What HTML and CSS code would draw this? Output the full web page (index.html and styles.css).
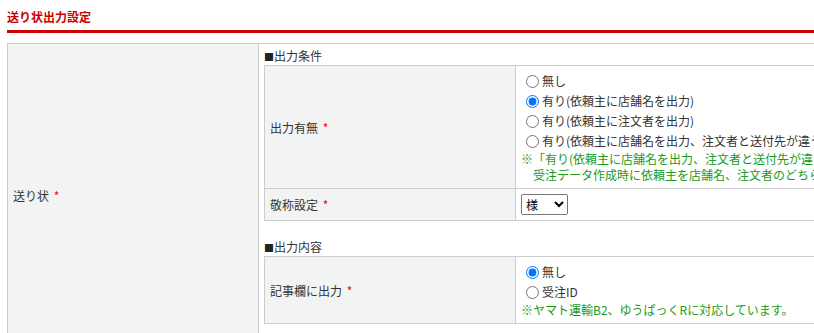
FILE: index.html
```html
<!DOCTYPE html>
<html lang="ja">
<head>
    <meta charset="UTF-8">
    <meta name="viewport" content="width=device-width, initial-scale=1.0">
    <title>送り状出力設定</title>
    <link rel="stylesheet" href="styles.css">
</head>
<body>
    <div class="page">
        <!-- 見出し -->
        <h2 class="section-title">送り状出力設定</h2>

        <table class="form-table">
            <tr>
                <th class="form-label">送り状 <span class="required">*</span></th>
                <td class="form-body">
                    <!-- 出力条件 -->
                    <h3 class="sub-title"><span class="mark">■</span>出力条件</h3>
                    <table class="inner-table">
                        <tr>
                            <th class="form-label">出力有無 <span class="required">*</span></th>
                            <td class="form-value">
                                <label class="radio-line"><input type="radio" name="output">無し</label>
                                <label class="radio-line"><input type="radio" name="output" checked>有り(依頼主に店舗名を出力)</label>
                                <label class="radio-line"><input type="radio" name="output">有り(依頼主に注文者を出力)</label>
                                <label class="radio-line"><input type="radio" name="output">有り(依頼主に店舗名を出力、注文者と送付先が違う場合は注文者を出力)</label>
                                <p class="note">※「有り(依頼主に店舗名を出力、注文者と送付先が違う場合は注文者を出力)」を選択した場合、<br>受注データ作成時に依頼主を店舗名、注文者のどちらかに自動で設定します。</p>
                            </td>
                        </tr>
                        <tr>
                            <th class="form-label">敬称設定 <span class="required">*</span></th>
                            <td class="form-value">
                                <select class="honorific">
                                    <option>様</option>
                                    <option>殿</option>
                                    <option>なし</option>
                                </select>
                            </td>
                        </tr>
                    </table>

                    <!-- 出力内容 -->
                    <h3 class="sub-title"><span class="mark">■</span>出力内容</h3>
                    <table class="inner-table">
                        <tr>
                            <th class="form-label">記事欄に出力 <span class="required">*</span></th>
                            <td class="form-value">
                                <label class="radio-line"><input type="radio" name="memo" checked>無し</label>
                                <label class="radio-line"><input type="radio" name="memo">受注ID</label>
                                <p class="note">※ヤマト運輸B2、ゆうぱっくRに対応しています。</p>
                            </td>
                        </tr>
                    </table>
                </td>
            </tr>
        </table>
    </div>
</body>
</html>
```

FILE: styles.css
```css
/* 全体 */
html, body {
    overflow: hidden;
}

body {
    margin: 0;
    font-family: "Noto Sans CJK JP", "Noto Sans", sans-serif;
    font-size: 12px;
    color: #333;
    background-color: #fff;
}

.page {
    width: 1300px;
    padding-left: 7px;
}

/* 見出し */
.section-title {
    margin: 0 0 10px;
    padding: 8px 0 5px;
    font-size: 12px;
    line-height: 17px;
    font-weight: bold;
    color: #cc0000;
    border-bottom: 3px solid #cc0000;
}

.sub-title {
    margin: 0;
    height: 18px;
    font-size: 12px;
    font-weight: normal;
    line-height: 18px;
}

.sub-title .mark {
    display: inline-block;
    width: 10px;
    font-size: 10px;
    line-height: 10px;
    color: #222;
}

.inner-table + .sub-title {
    margin-top: 17px;
}

/* テーブル */
.form-table,
.inner-table {
    border-collapse: collapse;
    width: 100%;
}

.form-label {
    width: 240px;
    padding: 0 5px;
    background-color: #f2f3f3;
    border: 1px solid #ccc;
    text-align: left;
    font-weight: normal;
    vertical-align: middle;
    white-space: nowrap;
}

.form-body {
    padding: 3px 5px 22px;
    border: 1px solid #ccc;
    vertical-align: top;
}

.form-value {
    padding: 5px;
    border: 1px solid #ccc;
    vertical-align: middle;
    white-space: nowrap;
}

.required {
    margin-left: 2px;
    color: #ff0000;
}

/* ラジオ */
.radio-line {
    display: block;
    line-height: 20px;
    height: 20px;
}

.radio-line input {
    margin: 0 3px 0 5px;
    vertical-align: -2px;
}

.note {
    margin: 0;
    line-height: 16px;
    padding-left: 1em;
    text-indent: -1em;
    color: #1a9a1a;
}

/* セレクト */
.honorific {
    width: 47px;
    height: 21px;
    margin: 0;
    font-family: inherit;
    font-size: 12px;
}
```
